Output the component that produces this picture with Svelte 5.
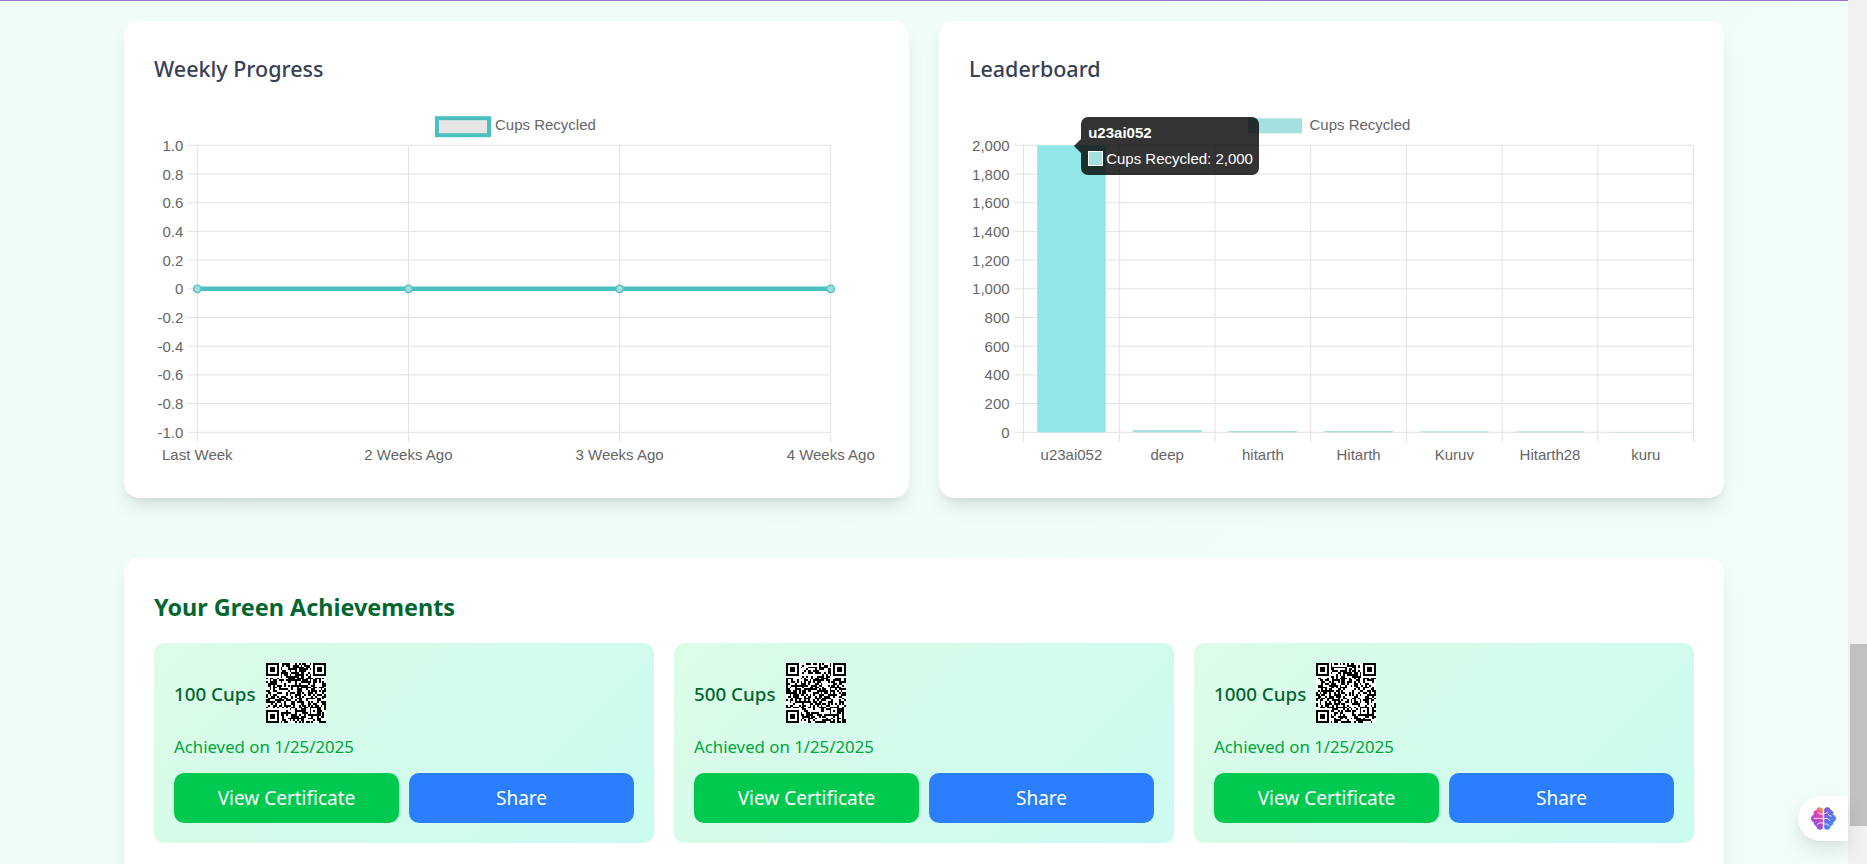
<script>
	const yLine = ['1.0', '0.8', '0.6', '0.4', '0.2', '0', '-0.2', '-0.4', '-0.6', '-0.8', '-1.0']
	const yBar = ['2,000', '1,800', '1,600', '1,400', '1,200', '1,000', '800', '600', '400', '200', '0']
	const weeks = ['Last Week', '2 Weeks Ago', '3 Weeks Ago', '4 Weeks Ago']
	const users = [
		{ name: 'u23ai052', cups: 2000 },
		{ name: 'deep', cups: 16 },
		{ name: 'hitarth', cups: 9 },
		{ name: 'Hitarth', cups: 9 },
		{ name: 'Kuruv', cups: 7 },
		{ name: 'Hitarth28', cups: 6 },
		{ name: 'kuru', cups: 2 }
	]

	// plot area inside the svg
	const top = 39.3
	const bottom = 326.3
	const step = (bottom - top) / 10
	const lineL = 43.3
	const lineR = 676.7
	const lineStep = (lineR - lineL) / 3
	const barL = 54.6
	const barR = 724.6
	const barStep = (barR - barL) / 7

	function qr(seed) {
		const n = 33
		let s = seed
		const rnd = () => {
			s = (s * 1664525 + 1013904223) % 4294967296
			return (s >>> 16) % 100 < 50
		}
		const cells = []
		const inFinder = (x, y, ox, oy) => x >= ox && x < ox + 7 && y >= oy && y < oy + 7
		const ring = (x, y, ox, oy) => {
			const a = x - ox
			const b = y - oy
			if (a === 0 || a === 6 || b === 0 || b === 6) return true
			return a >= 2 && a <= 4 && b >= 2 && b <= 4
		}
		const corners = [[0, 0], [n - 7, 0], [0, n - 7]]
		for (let y = 0; y < n; y++) {
			for (let x = 0; x < n; x++) {
				const r = rnd()
				const c = corners.find(([ox, oy]) => inFinder(x, y, ox, oy))
				if (c) {
					if (ring(x, y, c[0], c[1])) cells.push([x, y])
				} else if (x === 7 && y < 8) {
				} else if (y === 7 && (x < 8 || x >= n - 8)) {
				} else if (x === n - 8 && y < 8) {
				} else if (x === 7 && y >= n - 8) {
				} else if (y === n - 8 && x < 8) {
				} else if (x >= 24 && x <= 28 && y >= 24 && y <= 28) {
					const a = Math.max(Math.abs(x - 26), Math.abs(y - 26))
					if (a !== 1) cells.push([x, y])
				} else if (r) {
					cells.push([x, y])
				}
			}
		}
		return cells
	}

	const certs = [
		{ label: '100 Cups', seed: 11 },
		{ label: '500 Cups', seed: 502 },
		{ label: '1000 Cups', seed: 1009 }
	]
</script>

<div class="screen">
	<main>
		<section class="charts">
			<div class="card">
				<h3>Weekly Progress</h3>
				<svg class="chart" viewBox="0 0 725 362" width="725" height="362">
					<rect x="283" y="12.2" width="52" height="17" fill="#e6e6e6" stroke="#4bc0c0" stroke-width="4" />
					<text class="lbl" x="341" y="24">Cups Recycled</text>

					{#each yLine as tick, i}
						<line class="grid" x1={lineL - 10} x2={lineR} y1={top + i * step} y2={top + i * step} />
						<text class="lbl" x={lineL - 14} y={top + i * step + 5.5} text-anchor="end">{tick}</text>
					{/each}
					{#each weeks as week, i}
						<line class="grid" x1={lineL + i * lineStep} x2={lineL + i * lineStep} y1={top} y2={bottom + 10} />
						<text class="lbl" x={lineL + i * lineStep} y="354" text-anchor="middle">{week}</text>
					{/each}

					<line x1={lineL} x2={lineR} y1={top + 5 * step} y2={top + 5 * step} stroke="#4bc0c0" stroke-width="4.5" />
					{#each weeks as week, i}
						<circle cx={lineL + i * lineStep} cy={top + 5 * step} r="3.75" fill="#a0dcdc" stroke="#4bc0c0" stroke-width="1.25" />
					{/each}
				</svg>
			</div>

			<div class="card">
				<h3>Leaderboard</h3>
				<svg class="chart" viewBox="0 0 725 362" width="725" height="362">
					<rect x="279" y="12.3" width="54" height="15" fill="#a5e0e0" />
					<text class="lbl" x="340.5" y="24">Cups Recycled</text>

					{#each yBar as tick, i}
						<line class="grid" x1={barL - 10} x2={barR} y1={top + i * step} y2={top + i * step} />
						<text class="lbl" x={barL - 14} y={top + i * step + 5.5} text-anchor="end">{tick}</text>
					{/each}
					{#each Array(8) as _, i}
						<line class="grid" x1={barL + i * barStep} x2={barL + i * barStep} y1={top} y2={bottom + 10} />
					{/each}
					{#each users as user, i}
						<rect
							x={barL + i * barStep + 13.6}
							y={bottom - (user.cups / 2000) * (bottom - top)}
							width="68.5"
							height={(user.cups / 2000) * (bottom - top)}
							fill={i === 0 ? '#91e7e7' : '#a5e0e0'}
						/>
						<text class="lbl" x={barL + (i + 0.5) * barStep} y="354" text-anchor="middle">{user.name}</text>
					{/each}
				</svg>
				<div class="tooltip">
					<strong>u23ai052</strong>
					<div class="tip-row"><i></i><span>Cups Recycled: 2,000</span></div>
				</div>
			</div>
		</section>

		<section class="card achievements">
			<h2>Your Green Achievements</h2>
			<div class="cert-grid">
				{#each certs as cert}
					<article class="cert">
						<div class="cert-head">
							<span>{cert.label}</span>
							<svg class="qr" viewBox="0 0 33 33" width="60" height="60" shape-rendering="crispEdges">
								<rect width="33" height="33" fill="#fff" />
								{#each qr(cert.seed) as [x, y]}
									<rect {x} {y} width="1" height="1" />
								{/each}
							</svg>
						</div>
						<p>Achieved on 1/25/2025</p>
						<div class="actions">
							<button class="green">View Certificate</button>
							<button class="blue">Share</button>
						</div>
					</article>
				{/each}
			</div>
		</section>
	</main>

	<div class="scrollbar"><div class="thumb"></div></div>

	<button class="assistant" aria-label="Assistant">
		<svg viewBox="0 0 25 23" width="25" height="23">
			<defs>
				<linearGradient id="brainL" x1="0.8" y1="0" x2="0.3" y2="1">
					<stop offset="0" stop-color="#f7a13a" />
					<stop offset="0.3" stop-color="#e83fb0" />
					<stop offset="1" stop-color="#7d55e8" />
				</linearGradient>
				<linearGradient id="brainR" x1="0.2" y1="0" x2="0.8" y2="1">
					<stop offset="0" stop-color="#8a50e0" />
					<stop offset="1" stop-color="#2f9bff" />
				</linearGradient>
			</defs>
			<path fill="url(#brainL)" d="M11.8 2.5C11.4 .8 9.8 0 8.3 .3 6.8 .5 5.7 1.5 5.5 3 3.8 3.2 2.6 4.4 2.6 6c0 .6.1 1 .3 1.5C1.2 8.2 0 9.6 0 11.4c0 1.7 1 3.1 2.6 3.7-.3 1.8.7 3.4 2.6 3.9.3 2.2 1.8 3.7 3.8 3.7 1.3 0 2.3-.6 2.8-1.6Z" />
			<path fill="url(#brainR)" d="M13.2 2.5C13.6 .8 15.2 0 16.7 .3 18.2 .5 19.3 1.5 19.5 3 21.2 3.2 22.4 4.4 22.4 6c0 .6-.1 1-.3 1.5 1.7.7 2.9 2.1 2.9 3.9 0 1.7-1 3.1-2.6 3.7.3 1.8-.7 3.4-2.6 3.9-.3 2.2-1.8 3.7-3.8 3.7-1.3 0-2.3-.6-2.8-1.6Z" />
			<g fill="none" stroke="#fff" stroke-width="1" opacity="0.85">
				<path d="M11.8 7H8.5L7 5M2.5 11.4h9.3M11.8 16H8l-2 2" />
				<path d="M13.2 6.5h2l1.5-2M16.7 6.5l2 2.5h2M13.2 11.5h3.5l2.5 2.5M13.2 17h3l2 2" />
			</g>
		</svg>
	</button>
</div>

<style>
	:global(body) {
		margin: 0;
	}

	.screen {
		position: relative;
		display: flex;
		height: 864px;
		overflow: hidden;
		font-family: 'Noto Sans', sans-serif;
	}

	main {
		flex: 1;
		height: 864px;
		box-sizing: border-box;
		padding: 21px 124px 0;
		border-top: 1px solid #9575c5;
		background: linear-gradient(135deg, #f0fdf6, #f0fdf9);
	}

	.charts {
		display: grid;
		grid-template-columns: 1fr 1fr;
		gap: 30px;
		margin-top: -1px;
	}

	.card {
		position: relative;
		box-sizing: border-box;
		padding: 30px;
		background: #fff;
		border-radius: 15px;
		box-shadow: 0 12px 19px -4px rgba(0, 0, 0, 0.1), 0 5px 8px -5px rgba(0, 0, 0, 0.1);
	}

	h3 {
		margin: 0 0 19px;
		font-size: 21.5px;
		line-height: 36px;
		font-weight: 500;
		color: #364153;
	}

	.chart {
		display: block;
		font-family: 'Liberation Sans', Arial, sans-serif;
	}

	.lbl {
		font-size: 15px;
		fill: #666;
	}

	.grid {
		stroke: #e2e2e2;
		stroke-width: 1;
	}

	.tooltip {
		position: absolute;
		left: 141.7px;
		top: 95.7px;
		width: 178px;
		height: 58px;
		box-sizing: border-box;
		padding: 7px 7.5px;
		border-radius: 7px;
		background: rgba(0, 0, 0, 0.8);
		color: #fff;
		font: 15px 'Liberation Sans', Arial, sans-serif;
	}

	.tooltip::before {
		content: '';
		position: absolute;
		left: -7px;
		top: 22px;
		border: 7px solid transparent;
		border-left: 0;
		border-right-color: rgba(0, 0, 0, 0.8);
	}

	.tooltip strong {
		display: block;
		line-height: 18px;
	}

	.tip-row {
		display: flex;
		align-items: center;
		gap: 3px;
		margin-top: 9px;
		line-height: 15px;
		white-space: nowrap;
	}

	.tip-row i {
		flex: none;
		width: 15px;
		height: 15px;
		box-sizing: border-box;
		background: #a5e0e0;
		border: 1.25px solid #fff;
	}

	.achievements {
		margin-top: 60px;
		height: 420px;
	}

	h2 {
		margin: 0 0 17px;
		font-size: 23.4px;
		line-height: 38px;
		font-weight: 700;
		color: #016630;
	}

	.cert-grid {
		display: grid;
		grid-template-columns: repeat(3, 1fr);
		gap: 20px;
	}

	.cert {
		padding: 20px;
		height: 200px;
		box-sizing: border-box;
		border-radius: 10px;
		background: linear-gradient(135deg, #dcfce7, #cbfbf1);
	}

	.cert-head {
		display: flex;
		align-items: center;
		gap: 10px;
		font-size: 18.8px;
		font-weight: 500;
		color: #016630;
	}

	.cert-head span {
		padding-top: 2px;
	}

	.qr {
		display: block;
	}

	.cert p {
		margin: 11px 0 0;
		font-size: 16.8px;
		line-height: 25px;
		color: #00a63e;
	}

	.actions {
		display: grid;
		grid-template-columns: 1fr 1fr;
		gap: 10px;
		margin-top: 14px;
	}

	button {
		border: 0;
		font-family: inherit;
	}

	.actions button {
		height: 50px;
		border-radius: 10px;
		color: #fff;
		font-size: 19px;
	}

	.green {
		background: #00c950;
	}

	.blue {
		background: #2b7fff;
	}

	.scrollbar {
		width: 19px;
		background: #f1f1f1;
		padding-top: 644px;
		box-sizing: border-box;
	}

	.thumb {
		margin-left: 2px;
		height: 182px;
		background: #c1c1c1;
	}

	.assistant {
		position: absolute;
		right: 19px;
		top: 796px;
		width: 50px;
		height: 45px;
		padding: 0 0 0 13px;
		display: flex;
		align-items: center;
		border-radius: 23px 0 0 23px;
		background: #fff;
		box-shadow: 0 10px 20px rgba(0, 0, 0, 0.08), 0 4px 8px rgba(0, 0, 0, 0.04);
	}
</style>
